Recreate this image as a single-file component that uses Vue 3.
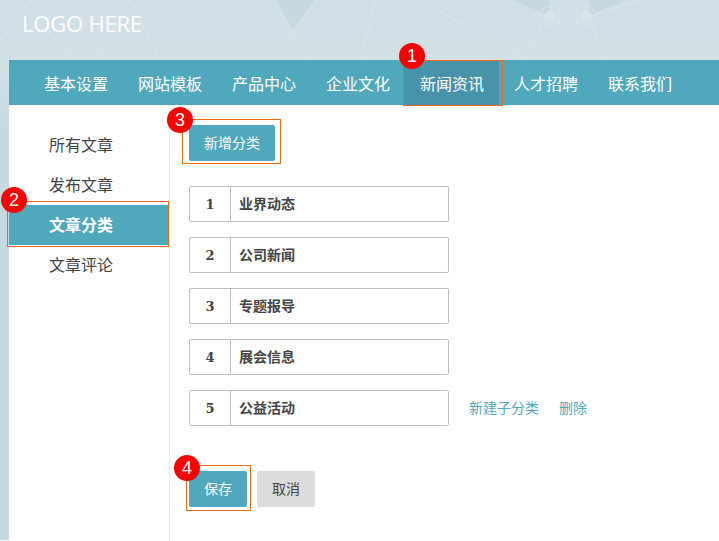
<script setup>
const navItems = ['基本设置', '网站模板', '产品中心', '企业文化', '新闻资讯', '人才招聘', '联系我们']
const sideItems = ['所有文章', '发布文章', '文章分类', '文章评论']
const categories = ['业界动态', '公司新闻', '专题报导', '展会信息', '公益活动']
</script>

<template>
  <div class="page">
    <svg class="bg" width="719" height="541" viewBox="0 0 719 541" aria-hidden="true">
      <g fill="#bfd3da" opacity=".55">
        <path d="M275 0h41l-23 32z" />
        <path d="M513 0h37v16z" />
        <path d="M590 0h35l-35 16z" />
      </g>
      <g stroke="#dce8ec" stroke-width="1.5" fill="none" opacity=".55">
        <path d="M130 0l30 60M130 0l-34 60M32 0L0 40M36 20l42 40M293 32l-14 28M293 32l14 28M316 0l-23 32M275 0l18 32M376 0l-16 60" />
        <path d="M420 0l107 60M542 24l-17 36M592 24l10 36M597 13l46-13M719 20l-59 40M560 22l8 5 12-5" />
        <circle cx="550" cy="16" r="10" />
        <circle cx="586" cy="16" r="10" />
      </g>
      <g fill="#d8e4e8">
        <circle cx="293" cy="34" r="6" opacity=".5" />
        <circle cx="550" cy="16" r="6" />
        <circle cx="586" cy="16" r="6" />
      </g>
    </svg>

    <header class="top">
      <div class="logo">LOGO HERE</div>
    </header>

    <div class="shell">
      <nav class="nav">
        <a v-for="(item, i) in navItems" :key="item" class="nav-item" :class="{ active: i === 4 }">
          {{ item }}
          <template v-if="i === 4">
            <span class="mark mark-nav"></span>
            <span class="badge badge-1">1</span>
          </template>
        </a>
      </nav>

      <div class="body">
        <aside class="side">
          <a v-for="(item, i) in sideItems" :key="item" class="side-item" :class="{ active: i === 2 }">
            {{ item }}
            <template v-if="i === 2">
              <span class="mark mark-side"></span>
              <span class="badge badge-2">2</span>
            </template>
          </a>
        </aside>

        <main class="main">
          <button class="btn primary add">
            新增分类
            <span class="mark mark-add"></span>
            <span class="badge badge-3">3</span>
          </button>

          <div class="rows">
            <div v-for="(name, i) in categories" :key="name" class="row">
              <div class="field">
                <span class="num">{{ i + 1 }}</span>
                <span class="name">{{ name }}</span>
              </div>
              <div v-if="i === 4" class="links">
                <a>新建子分类</a>
                <a>删除</a>
              </div>
            </div>
          </div>

          <div class="actions">
            <button class="btn primary">
              保存
              <span class="mark mark-save"></span>
              <span class="badge badge-4">4</span>
            </button>
            <button class="btn plain">取消</button>
          </div>
        </main>
      </div>
    </div>
  </div>
</template>

<style>
html,
body {
  margin: 0;
  overflow: hidden;
}
</style>

<style scoped>
.page {
  position: relative;
  width: 719px;
  height: 541px;
  overflow: hidden;
  background: linear-gradient(180deg, #cfdfe5 0, #d2e1e6 60px, #c6d9e0 130px, #c6d9e0 540px, #fff 540px);
  font-family: "Noto Sans CJK SC", "Noto Sans", sans-serif;
}
.bg {
  position: absolute;
  top: 0;
  left: 0;
}
.top {
  position: relative;
  height: 60px;
  box-sizing: border-box;
  padding: 8px 0 0 22px;
}
.logo {
  font-family: "Open Sans", sans-serif;
  font-size: 22px;
  letter-spacing: -0.2px;
  line-height: 30px;
  color: #fff;
}
.shell {
  position: relative;
  margin-left: 9px;
  height: 481px;
  background: #fff;
}
.nav {
  display: flex;
  height: 45px;
  padding-left: 20px;
  background: #50a8bc;
}
.nav-item {
  position: relative;
  width: 94px;
  line-height: 46px;
  text-align: center;
  font-size: 16px;
  color: #fff;
}
.nav-item.active {
  background: #4793a9;
  box-shadow: -1px 0 #4793a9;
}
.body {
  display: flex;
  height: 436px;
}
.side {
  width: 161px;
  box-sizing: border-box;
  padding-top: 20px;
  border-right: 1px solid #e8e8e8;
}
.side-item {
  position: relative;
  display: block;
  height: 40px;
  padding-left: 40px;
  line-height: 38px;
  font-size: 16px;
  color: #444;
}
.side-item.active {
  width: 159px;
  box-sizing: border-box;
  background: #50a8bc;
  color: #fff;
  font-weight: 700;
}
.main {
  flex: 1;
  padding: 20px 0 0 19px;
}
.btn {
  position: relative;
  display: block;
  box-sizing: border-box;
  height: 36px;
  padding: 0 15px 2px;
  border: 0;
  border-radius: 2px;
  font: 14px/34px "Noto Sans CJK SC", "Noto Sans", sans-serif;
}
.primary {
  background: #50a8bc;
  color: #fff;
}
.plain {
  background: #dcdcdc;
  color: #444;
}
.add {
  width: 86px;
}
.rows {
  display: flex;
  flex-direction: column;
  gap: 15px;
  margin-top: 25px;
}
.row {
  display: flex;
  align-items: center;
  height: 36px;
}
.field {
  display: flex;
  box-sizing: border-box;
  width: 260px;
  height: 36px;
  border: 1px solid #bdbdbd;
  border-radius: 2px;
  line-height: 33px;
}
.num {
  width: 41px;
  box-sizing: border-box;
  border-right: 1px solid #bdbdbd;
  text-align: center;
  font-family: "DejaVu Serif", serif;
  font-size: 13px;
  line-height: 35px;
  font-weight: 700;
  color: #444;
}
.name {
  padding-left: 8px;
  font-size: 14px;
  font-weight: 700;
  color: #444;
}
.links {
  display: flex;
  gap: 20px;
  margin-left: 20px;
  padding-bottom: 2px;
  font-size: 14px;
  line-height: 34px;
  color: #50a8bc;
}
.actions {
  display: flex;
  gap: 10px;
  margin-top: 45px;
}
.mark {
  position: absolute;
  z-index: 1;
  box-sizing: border-box;
  border: 1px solid #f26a12;
  pointer-events: none;
}
.mark-nav {
  inset: 0 -4px -1px -2px;
}
.mark-side {
  inset: -4px -1px -2px -2px;
}
.mark-add {
  inset: -6px -6px -3px -7px;
}
.mark-save {
  inset: -6px -4px -4px -3px;
}
.badge {
  position: absolute;
  z-index: 2;
  width: 26px;
  height: 26px;
  border-radius: 50%;
  background: #f00;
  color: #fff;
  font: 18px/26px "Liberation Sans", sans-serif;
  text-align: center;
}
.badge-1 {
  left: -6px;
  top: -17px;
}
.badge-2 {
  left: -8px;
  top: -18px;
}
.badge-3 {
  left: -22px;
  top: -18px;
}
.badge-4 {
  left: -15px;
  top: -16px;
}
</style>
